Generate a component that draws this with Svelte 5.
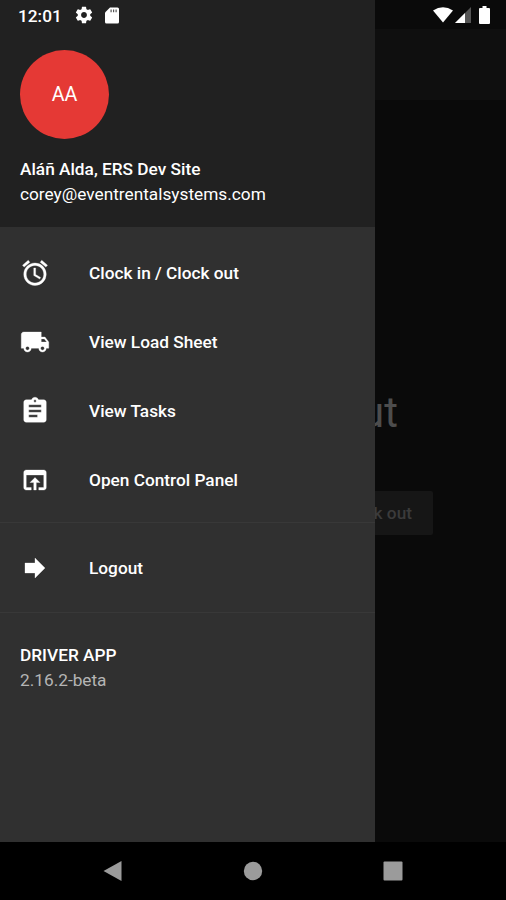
<script lang="ts">
  interface Item {
    label: string;
    icon: string;
  }

  const user = {
    initials: 'AA',
    name: 'Aláñ Alda, ERS Dev Site',
    email: 'corey@eventrentalsystems.com',
  };

  const items: Item[] = [
    {
      label: 'Clock in / Clock out',
      icon: 'M22 5.72l-4.6-3.86-1.29 1.53 4.6 3.86L22 5.72zM7.88 3.39L6.6 1.86 2 5.71l1.29 1.53 4.59-3.85zM12.5 8H11v6l4.75 2.85.75-1.23-4-2.37V8zM12 4c-4.97 0-9 4.03-9 9s4.02 9 9 9a9 9 0 0 0 0-18zm0 16c-3.87 0-7-3.13-7-7s3.13-7 7-7 7 3.13 7 7-3.13 7-7 7z',
    },
    {
      label: 'View Load Sheet',
      icon: 'M20 8h-3V4H3c-1.1 0-2 .9-2 2v11h2c0 1.66 1.34 3 3 3s3-1.34 3-3h6c0 1.66 1.34 3 3 3s3-1.34 3-3h2v-5l-3-4zM6 18.5c-.83 0-1.5-.67-1.5-1.5s.67-1.5 1.5-1.5 1.5.67 1.5 1.5-.67 1.5-1.5 1.5zm13.5-9l1.96 2.5H17V9.5h2.5zm-1.5 9c-.83 0-1.5-.67-1.5-1.5s.67-1.5 1.5-1.5 1.5.67 1.5 1.5-.67 1.5-1.5 1.5z',
    },
    {
      label: 'View Tasks',
      icon: 'M19 3h-4.18C14.4 1.84 13.3 1 12 1c-1.3 0-2.4.84-2.82 2H5c-1.1 0-2 .9-2 2v14c0 1.1.9 2 2 2h14c1.1 0 2-.9 2-2V5c0-1.1-.9-2-2-2zm-7 0c.55 0 1 .45 1 1s-.45 1-1 1-1-.45-1-1 .45-1 1-1zm2 14H7v-2h7v2zm3-4H7v-2h10v2zm0-4H7V7h10v2z',
    },
    {
      label: 'Open Control Panel',
      icon: 'M19 4H5c-1.11 0-2 .9-2 2v12c0 1.1.89 2 2 2h4v-2H5V8h14v10h-4v2h4c1.1 0 2-.9 2-2V6c0-1.1-.89-2-2-2zm-7 6l-4 4h3v6h2v-6h3l-4-4z',
    },
  ];

  const logout: Item = { label: 'Logout', icon: 'M12 8V4l8 8-8 8v-4H4V8z' };
</script>

{#snippet row(item: Item)}
  <button type="button" class="row">
    <svg class="icon" viewBox="0 0 24 24" aria-hidden="true"><path d={item.icon} /></svg>
    <span>{item.label}</span>
  </button>
{/snippet}

<div class="screen">
  <div class="body">
    <aside class="drawer">
      <header>
        <div class="avatar">{user.initials}</div>
        <div class="name">{user.name}</div>
        <div class="email">{user.email}</div>
      </header>
      <nav class="main">
        {#each items as item}
          {@render row(item)}
        {/each}
      </nav>
      <nav class="session">
        {@render row(logout)}
      </nav>
      <footer>
        <div class="app">DRIVER APP</div>
        <div class="version">2.16.2-beta</div>
      </footer>
    </aside>

    <main>
      <div class="appbar"></div>
      <h1>ut</h1>
      <div class="action">k out</div>
    </main>
  </div>

  <div class="navbar">
    <svg viewBox="0 0 20 22" width="20" height="22"><path d="M18.5 1v20L.5 11z" /></svg>
    <svg viewBox="0 0 20 20" width="20" height="20"><circle cx="10" cy="10" r="9.2" /></svg>
    <svg viewBox="0 0 20 20" width="20" height="20"><rect x=".5" y=".5" width="19" height="19" rx="1" /></svg>
  </div>

  <div class="status">
    <span class="time">12:01</span>
    <svg class="gear" viewBox="0 0 24 24" width="20" height="20">
      <path d="M19.43 12.98c.04-.32.07-.64.07-.98s-.03-.66-.07-.98l2.11-1.65c.19-.15.24-.42.12-.64l-2-3.46c-.12-.22-.39-.3-.61-.22l-2.49 1c-.52-.4-1.08-.73-1.69-.98l-.38-2.65A.488.488 0 0 0 14 2h-4c-.25 0-.46.18-.49.42l-.38 2.65c-.61.25-1.17.59-1.69.98l-2.49-1c-.23-.09-.49 0-.61.22l-2 3.46c-.13.22-.07.49.12.64l2.11 1.65c-.04.32-.07.65-.07.98s.03.66.07.98l-2.11 1.65c-.19.15-.24.42-.12.64l2 3.46c.12.22.39.3.61.22l2.49-1c.52.4 1.08.73 1.69.98l.38 2.65c.03.24.24.42.49.42h4c.25 0 .46-.18.49-.42l.38-2.65c.61-.25 1.17-.59 1.69-.98l2.49 1c.23.09.49 0 .61-.22l2-3.46c.12-.22.07-.49-.12-.64l-2.11-1.65zM12 15.5c-1.93 0-3.5-1.57-3.5-3.5s1.57-3.5 3.5-3.5 3.5 1.57 3.5 3.5-1.57 3.5-3.5 3.5z" />
    </svg>
    <svg class="card" viewBox="0 0 14 17" width="14" height="17">
      <path d="M5 .5h7.5Q14 .5 14 2v13q0 1.5-1.5 1.5h-11Q0 16.5 0 15V5.5z" />
      <path class="pins" d="M5.5 2.5h1.2v2.8H5.5zM8 2.5h1.2v2.8H8zM10.5 2.5h1.2v2.8h-1.2z" />
    </svg>
    <svg class="wifi" viewBox="0 0 20 16" width="20" height="16">
      <path d="M10 15.5L0 3.5Q10-3.2 20 3.5z" />
    </svg>
    <svg class="signal" viewBox="0 0 16 16" width="16" height="16">
      <path class="faint" d="M16 0v16H0z" />
      <path d="M10 6v10H0z" />
    </svg>
    <svg class="battery" viewBox="0 0 11 18" width="11" height="18">
      <path d="M3.5 0h4v2H10q1 0 1 1v14q0 1-1 1H1q-1 0-1-1V3q0-1 1-1h2.5z" />
    </svg>
  </div>
</div>

<style>
  :global(body) {
    background: #000;
  }
  .screen {
    position: relative;
    width: 506px;
    height: 900px;
    display: flex;
    flex-direction: column;
    overflow: hidden;
    background: #000;
    color: #fff;
    font-family: Roboto, 'Liberation Sans', sans-serif;
    font-size: 17.25px;
  }
  svg {
    display: block;
    fill: currentColor;
    flex: none;
  }
  .body {
    flex: 1;
    min-height: 0;
    display: flex;
  }
  .drawer {
    flex: none;
    width: 375px;
    background: #303030;
  }
  header {
    box-sizing: border-box;
    height: 227px;
    padding: 49.5px 20px 0;
    background: #212121;
    line-height: 24px;
  }
  .avatar {
    width: 89px;
    height: 89px;
    margin-bottom: 18.5px;
    border-radius: 50%;
    background: #e53935;
    font-size: 19.7px;
    line-height: 89px;
    text-align: center;
  }
  .name,
  .app {
    font-weight: 500;
  }
  .email {
    padding-top: 1px;
  }
  .main {
    padding: 11px 0 8px;
  }
  .session {
    padding: 10px 0;
    border: solid #383838;
    border-width: 1px 0;
  }
  .row {
    display: flex;
    align-items: center;
    gap: 39px;
    width: 100%;
    height: 69px;
    padding: 0 20px;
    border: 0;
    background: none;
    color: inherit;
    font: inherit;
    font-weight: 500;
    text-align: left;
  }
  .icon {
    width: 30px;
    height: 30px;
    stroke: currentColor;
    stroke-width: 0.25;
  }
  footer {
    padding: 29.5px 20px 0;
    line-height: 25px;
  }
  .version {
    color: #b5b5b5;
  }
  main {
    flex: 1;
    min-width: 0;
    overflow: hidden;
    background: #0a0a0a;
  }
  .appbar {
    height: 71px;
    margin-top: 29px;
    background: #0f0f0f;
  }
  /* the drawer covers the start of both texts */
  h1 {
    margin: 288px 0 0 -14px;
    color: #4d4d4d;
    font-size: 42px;
    font-weight: 400;
    line-height: 50px;
  }
  .action {
    box-sizing: border-box;
    width: 58px;
    height: 44px;
    margin-top: 53px;
    padding-right: 21px;
    border-radius: 0 2px 2px 0;
    background: #161616;
    color: #3b3b3b;
    font-weight: 500;
    line-height: 44px;
    white-space: nowrap;
    display: flex;
    justify-content: flex-end;
  }
  .navbar {
    height: 58px;
    display: flex;
    align-items: center;
    justify-content: center;
    gap: 120px;
    background: #000;
    color: #9b9b9b;
  }
  .status {
    position: absolute;
    inset: 0 0 auto;
    display: flex;
    align-items: center;
    height: 30px;
    padding: 0 16.5px 0 18px;
  }
  .time {
    width: 56px;
    padding-top: 1px;
    font-weight: 500;
    font-size: 17.25px;
  }
  .card {
    margin-left: 10.5px;
  }
  .pins {
    fill: #555;
  }
  .wifi {
    margin-left: auto;
  }
  .signal {
    margin-left: 2px;
  }
  .faint {
    fill: #555;
  }
  .battery {
    margin-left: 7.5px;
  }
</style>
